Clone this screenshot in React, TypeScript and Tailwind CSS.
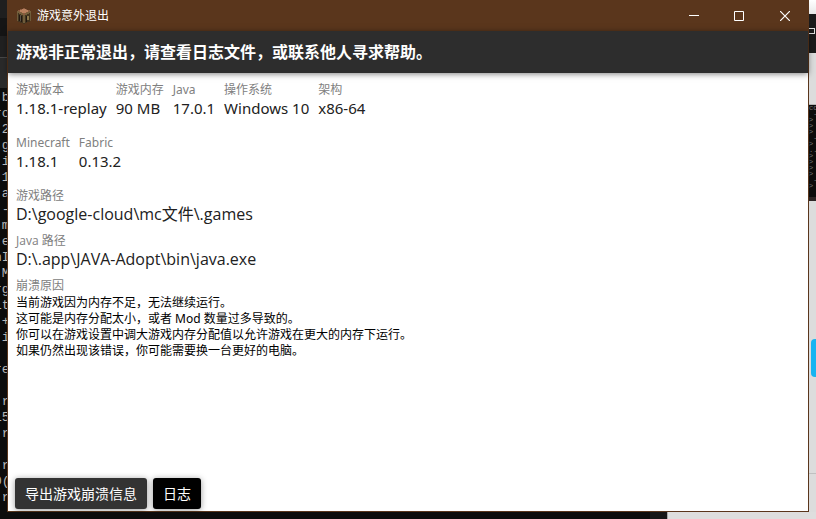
import type { ReactNode } from "react";

const LEFT_LINES = [
  " b", "ro", " 2", " g", ".i", " 1", ".a", " -", ".m", " e", "nI", ".M", "rg", "lt", " +", ".i", "",
  "re", "", " r", "15", " r", "", " r", "0(", " r",
];

function Field({ label, children }: { label: string; children: ReactNode }) {
  return (
    <div className="whitespace-nowrap">
      <dt className="h-4 text-xs leading-4 text-[#808080]">{label}</dt>
      <dd className="h-[21px] leading-[21px] text-[#212121]">{children}</dd>
    </div>
  );
}

function CraftingTable() {
  return (
    <svg viewBox="0 0 16 16" className="h-4 w-4" shapeRendering="crispEdges" aria-hidden="true">
      <path d="M1 3 8 0l7 3v10l-7 3-7-3z" fill="#43341f" />
      <path d="M1 3 8 0l7 3-7 4z" fill="#8a5a3f" />
      <path d="M6 1h4v1h2v2h-2v1H6V4H4V2h2z" fill="#b9815f" />
      <path d="M1 3h2v1h2v1h2v2H5V6H3V5H1zM15 3h-2v1h-2v1H9v2h2V6h2V5h2z" fill="#75603c" />
      <path d="M1 5h1v8H1zM7 7h2v8H7zM14 5h1v8h-1z" fill="#6f5c3b" />
      <path d="M3 7h1v6H3zM5 8h1v6H5zM10 8h1v6h-1z" fill="#201811" />
      <path d="M4 7h1v6H4z" fill="#5a5146" />
      <path d="M11 8h2v4h-2z" fill="#8b7549" />
    </svg>
  );
}

function LeftDesktop() {
  return (
    <div className="flex w-[7px] shrink-0 flex-col overflow-hidden bg-[#0c0c0c]" aria-hidden="true">
      <div className="h-[18px] shrink-0 bg-[#1f1f1f]" />
      <div className="h-[18px] shrink-0 bg-[#151515]" />
      <div className="h-[21px] shrink-0 bg-[#212121]" />
      <div className="h-[31px] shrink-0 border-t border-[#484848] bg-[#2a2a2a]" />
      <pre className="-ml-1.5 pt-0.5 font-['Liberation_Mono',monospace] text-[13px] leading-4 text-[#b8b8b8]">
        {LEFT_LINES.join("\n")}
      </pre>
    </div>
  );
}

function RightDesktop() {
  return (
    <div className="flex w-[7px] shrink-0 flex-col overflow-hidden bg-[#dcdcdc]" aria-hidden="true">
      <div className="h-3.5 shrink-0 bg-linear-to-b from-white to-[#e8e8e8]" />
      <div className="h-[39px] shrink-0 bg-[#1b1b1b] pt-3.5">
        <div className="h-1.5 w-1.5 border border-l-0 border-[#dddddd]" />
      </div>
      <div className="h-[52px] shrink-0 border-b border-[#b5b5b5]" />
      <div className="h-24 shrink-0 overflow-hidden border-b-4 border-[#2c2424] bg-[#0c0c0c] font-['Liberation_Mono',monospace] text-[7px] leading-[6px] text-[#777777]">
        <pre>{"co\n -\n>\n>\n>\n -\n>\n..\n>\n>\n>\n>\n -\n>"}</pre>
      </div>
      <div className="mt-[138px] ml-0.5 h-[38px] shrink-0 rounded-l bg-[#18b4f1]" />
      <div className="mt-24 h-px shrink-0 bg-[#c0c0c0]" />
    </div>
  );
}

export default function App() {
  return (
    <div className="flex h-screen flex-col overflow-hidden bg-[#dcdcdc] font-['Noto_Sans','Noto_Sans_CJK_SC',sans-serif]">
      <div className="flex min-h-0 flex-1">
        <LeftDesktop />
        <main className="flex min-w-0 flex-1 flex-col border-x border-b border-[#5a361c] bg-white">
          <header className="flex h-[31px] shrink-0 items-center bg-[#5a361c] pl-2 text-white">
            <CraftingTable />
            <span className="ml-[5px] flex-1 text-xs">游戏意外退出</span>
            <button type="button" aria-label="最小化" className="flex h-full w-11 items-center justify-center">
              <svg width="10" height="11" viewBox="0 0 10 11"><path d="M0 5.5h10" stroke="currentColor" /></svg>
            </button>
            <button type="button" aria-label="最大化" className="flex h-full w-[46px] items-center justify-center">
              <svg width="10" height="10" viewBox="0 0 10 10"><path d="M.5.5h9v9h-9z" fill="none" stroke="currentColor" /></svg>
            </button>
            <button type="button" aria-label="关闭" className="flex h-full w-[46px] items-center justify-center">
              <svg width="10" height="10" viewBox="0 0 10 10"><path d="M0 0l10 10M10 0 0 10" stroke="currentColor" strokeWidth="1.2" /></svg>
            </button>
          </header>
          <h1 className="z-10 h-[42px] shrink-0 bg-[#2d2d2d] px-2 text-base leading-[42px] font-bold text-white shadow-[0_1px_6px_rgba(0,0,0,0.5)]">
            游戏非正常退出，请查看日志文件，或联系他人寻求帮助。
          </h1>
          <section className="flex-1 px-2 pt-[9px]">
            <dl className="flex gap-[9px] pb-4 text-[15px]">
              <Field label="游戏版本">1.18.1-replay</Field>
              <Field label="游戏内存">90 MB</Field>
              <Field label="Java">17.0.1</Field>
              <Field label="操作系统">Windows 10</Field>
              <Field label="架构">x86-64</Field>
            </dl>
            <dl className="flex gap-[9px] pb-4 text-[15px]">
              <Field label="Minecraft">1.18.1</Field>
              <Field label="Fabric">0.13.2</Field>
            </dl>
            <dl className="flex flex-col gap-2 font-['Open_Sans','Noto_Sans_CJK_SC',sans-serif] text-base">
              <Field label="游戏路径">D:\google-cloud\mc文件\.games</Field>
              <Field label="Java 路径">D:\.app\JAVA-Adopt\bin\java.exe</Field>
            </dl>
            <h2 className="mt-2 h-4 text-xs leading-4 text-[#808080]">崩溃原因</h2>
            <p className="pt-px text-xs leading-4 text-black">
              当前游戏因为内存不足，无法继续运行。<br />
              这可能是内存分配太小，或者 Mod 数量过多导致的。<br />
              你可以在游戏设置中调大游戏内存分配值以允许游戏在更大的内存下运行。<br />
              如果仍然出现该错误，你可能需要换一台更好的电脑。
            </p>
          </section>
          <footer className="flex gap-1.5 px-[7px] pb-0.5 text-sm text-white">
            <button type="button" className="h-[31px] rounded-[3px] bg-[#333333] px-2.5 shadow-[0_1px_6px_rgba(0,0,0,0.4)]">导出游戏崩溃信息</button>
            <button type="button" className="h-[31px] rounded-[3px] bg-black px-2.5 shadow-[0_1px_6px_rgba(0,0,0,0.4)]">日志</button>
          </footer>
        </main>
        <RightDesktop />
      </div>
      <div className="flex h-[7px] shrink-0" aria-hidden="true">
        <div className="w-[650px] bg-[#0c0c0c]" />
        <div className="w-[17px] bg-[#171717]" />
        <div className="flex-1 border-l border-[#aaaaaa] bg-[#dedede]" />
      </div>
    </div>
  );
}
